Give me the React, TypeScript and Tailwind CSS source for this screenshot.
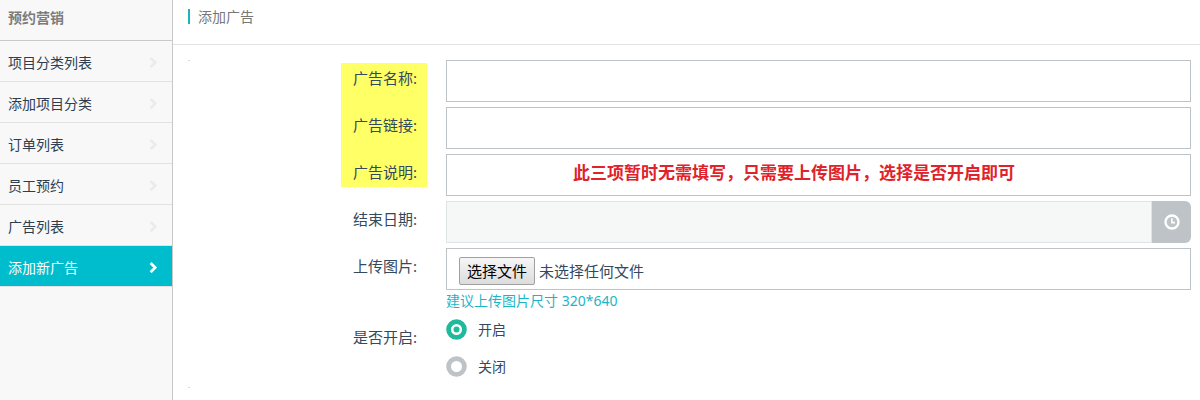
import React, { useState } from 'react';
import clsx from 'clsx';

const menuItems = ['项目分类列表', '添加项目分类', '订单列表', '员工预约', '广告列表', '添加新广告'];

const Chevron: React.FC<{ active: boolean }> = ({ active }) => (
  <svg
    width="10"
    height="12"
    viewBox="0 0 10 12"
    fill="none"
    strokeWidth="2.7"
    className={active ? 'stroke-white' : 'stroke-[#ebebeb]'}
  >
    <path d="M2.6 1 L7.2 5.6 L2.6 10.2" />
  </svg>
);

const ClockIcon: React.FC = () => (
  <svg width="16" height="16" viewBox="0 0 16 16" fill="none" stroke="#fff">
    <circle cx="8" cy="8" r="6.5" strokeWidth="2.4" />
    <path d="M7.9 4.2 V8.6 H11" strokeWidth="1.6" />
  </svg>
);

const Sidebar: React.FC = () => (
  <aside className="w-[173px] shrink-0 border-r border-[#c8c8c8] bg-[#f8f8f8]">
    <h2 className="h-[41px] border-b border-[#cacaca] pl-2 text-sm leading-[35px] font-bold text-[#7c7c7c]">
      预约营销
    </h2>
    <ul>
      {menuItems.map((item, index) => {
        const active = index === menuItems.length - 1;
        return (
          <li
            key={item}
            className={clsx(
              'flex h-[41px] items-center justify-between border-b border-[#e2e2e2] pt-1 pr-3.5 pl-2 text-sm',
              active ? 'bg-[#00bdcd] text-white' : 'text-[#2c3e50]'
            )}
          >
            <span>{item}</span>
            <Chevron active={active} />
          </li>
        );
      })}
    </ul>
  </aside>
);

interface FieldProps {
  label: string;
  children: React.ReactNode;
}

const Field: React.FC<FieldProps> = ({ label, children }) => (
  <div className="flex gap-[29px]">
    <label className="relative w-[228px] shrink-0 pt-[7px] text-right text-[15px] leading-[23px]">{label}:</label>
    <div className="w-[745px]">{children}</div>
  </div>
);

interface RadioProps {
  label: string;
  checked: boolean;
  onSelect: () => void;
}

const Radio: React.FC<RadioProps> = ({ label, checked, onSelect }) => (
  <button type="button" onClick={onSelect} className="flex h-[21px] items-center gap-[11px] text-sm">
    <svg width="21" height="21" viewBox="0 0 21 21" fill="none">
      <circle cx="10.5" cy="10.5" r="7.9" stroke={checked ? '#1fb99c' : '#bdc3c7'} strokeWidth="4.8" />
      {checked && <circle cx="10.5" cy="10.5" r="3" fill="#1fb99c" />}
    </svg>
    <span>{label}</span>
  </button>
);

const inputClass = 'block h-[42px] w-full border border-[#bdc3c7] bg-white px-3 text-[15px] outline-none';

export default function App() {
  const [enabled, setEnabled] = useState(true);

  return (
    <div className="flex h-[400px] w-[1200px] overflow-hidden bg-white font-['Noto_Sans','Noto_Sans_CJK_SC',sans-serif] text-[#34495e]">
      <Sidebar />
      <main className="flex-1">
        <header className="flex h-[45px] items-start border-b border-[#e3e3e3] pt-[9px] pl-[15px]">
          <h1 className="flex h-[15px] items-center border-l-2 border-[#1cb5bf] pl-2 text-sm text-[#777]">
            添加广告
          </h1>
        </header>

        <form className="relative flex flex-col gap-[5px] pt-[15px] pl-[16px]">
          <span className="absolute top-[15px] left-[15px] h-px w-0.5 bg-[#dcdcdc]" />
          <span className="absolute top-[342px] left-[15px] h-px w-0.5 bg-[#dcdcdc]" />
          {/* highlighted labels */}
          <div className="absolute top-[18px] left-[168px] h-[124px] w-[86px] bg-[#ffff66]" />

          <Field label="广告名称">
            <input className={inputClass} />
          </Field>
          <Field label="广告链接">
            <input className={inputClass} />
          </Field>
          <Field label="广告说明">
            <div className="relative">
              <input className={inputClass} />
              <p className="pointer-events-none absolute top-[7px] left-[127px] text-[17px] leading-6 font-bold whitespace-nowrap text-[#e0222a]">
                此三项暂时无需填写，只需要上传图片，选择是否开启即可
              </p>
            </div>
          </Field>
          <Field label="结束日期">
            <div className="flex h-[42px]">
              <input readOnly className="w-[706px] border border-[#dfe5e5] bg-[#f6f8f8] px-3 outline-none" />
              <span className="flex flex-1 items-center justify-center rounded-r-md bg-[#bdc3c7]">
                <ClockIcon />
              </span>
            </div>
          </Field>
          <Field label="上传图片">
            <div className="flex h-[42px] items-start gap-1 border border-[#bdc3c7] pt-2 pl-3 text-[15px]">
              <button
                type="button"
                className="h-7 w-[76px] rounded-[2px] border border-[#a0a0a0] bg-linear-to-b from-[#f6f6f6] to-[#dcdcdc] leading-[26px] whitespace-nowrap text-black"
              >
                选择文件
              </button>
              <span className="leading-7">未选择任何文件</span>
            </div>
            <p className="h-6 text-sm leading-[22px] text-[#1cb5c6]">建议上传图片尺寸 320*640</p>
          </Field>
          <Field label="是否开启">
            <div className="flex flex-col items-start gap-4">
              <Radio label="开启" checked={enabled} onSelect={() => setEnabled(true)} />
              <Radio label="关闭" checked={!enabled} onSelect={() => setEnabled(false)} />
            </div>
          </Field>
        </form>
      </main>
    </div>
  );
}
